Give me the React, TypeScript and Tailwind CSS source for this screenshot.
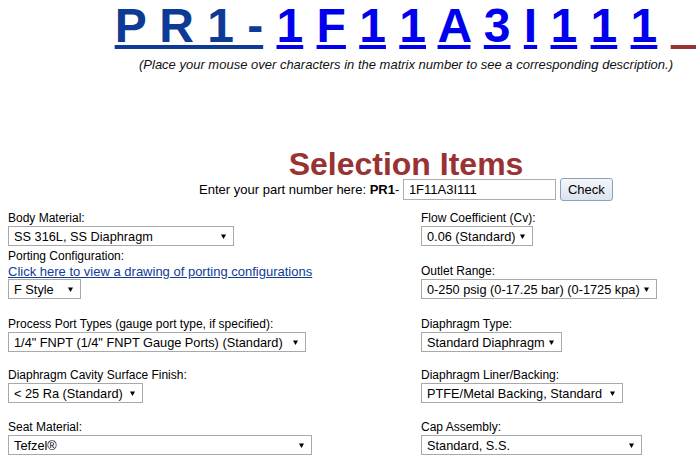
import React from "react";

const Arrow = () => (
  <svg width="5" height="5" viewBox="0 0 5 5" className="shrink-0">
    <path d="M0 0.5H5L2.5 5Z" fill="#000" />
  </svg>
);

const Sel = ({ w, text }: { w: string; text: string }) => (
  <div
    className={`flex h-[20px] items-center justify-between border border-[#a9a9a9] bg-white pl-[5px] pr-[7px] text-[12.75px] leading-[15px] text-black ${w}`}
  >
    <span className="whitespace-nowrap">{text}</span>
    <Arrow />
  </div>
);

const Label = ({ children }: { children: React.ReactNode }) => (
  <div className="whitespace-nowrap text-[12px] leading-[15px] text-black">{children}</div>
);

const chars = ["1", "F", "1", "1", "A", "3", "I", "1", "1", "1"];

export default function App() {
  return (
    <div className="h-[459px] w-[696px] overflow-hidden bg-white font-['Liberation_Sans',Arial,sans-serif] text-black">
      <div className="w-[812px]">
        <div className="whitespace-nowrap text-center text-[48px] font-bold leading-[52px]">
          <a className="text-[#0d3a94] underline">P R 1 -</a>{" "}
          {chars.map((c, i) => (
            <React.Fragment key={i}>
              <a className="text-[#0000ee] underline">{c}</a>{" "}
            </React.Fragment>
          ))}
          <span className="text-[#993333] underline">{"\u00a0\u00a0"}</span>
        </div>
        <div className="mt-[5px] whitespace-nowrap text-center text-[13px] italic leading-[16px] text-[#111]">
          (Place your mouse over characters in the matrix number to see a corresponding description.)
        </div>
        <div className="mt-[78px] text-center text-[32px] font-bold leading-[26px] text-[#993333]">
          Selection Items
        </div>
        <div className="flex h-[24px] items-center justify-center whitespace-nowrap text-[13px] leading-[15px]">
          <span>
            Enter your part number here: <b>PR1</b>-{"\u00a0"}
          </span>
          <div className="flex h-[21px] w-[153px] items-center border border-[#abadb3] bg-white pl-[5px] text-[13px]">
            1F11A3I111
          </div>
          <div className="ml-[4px] flex h-[23px] w-[53px] items-center justify-center rounded-[3px] border border-[#8aa0c0] bg-linear-to-b from-[#f4f7fb] to-[#dbe3ee] text-[13px]">
            Check
          </div>
        </div>

        <div className="pl-[8px]">
          <div className="mt-[10px] grid grid-cols-[413px_1fr]">
            <div>
              <Label>Body Material:</Label>
              <Sel w="w-[226px]" text="SS 316L, SS Diaphragm" />
            </div>
            <div>
              <Label>Flow Coefficient (Cv):</Label>
              <Sel w="w-[112px]" text="0.06 (Standard)" />
            </div>
          </div>
          <div className="mt-[3px] grid grid-cols-[413px_1fr]">
            <div>
              <Label>Porting Configuration:</Label>
              <div className="whitespace-nowrap text-[13px] leading-[15px]">
                <a className="text-[#103c96] underline">Click here to view a drawing of porting configurations</a>
              </div>
              <Sel w="w-[73px]" text="F Style" />
            </div>
            <div className="flex flex-col justify-end">
              <Label>Outlet Range:</Label>
              <Sel w="w-[236px]" text="0-250 psig (0-17.25 bar) (0-1725 kpa)" />
            </div>
          </div>
          <div className="mt-[18px] grid grid-cols-[413px_1fr]">
            <div>
              <Label>Process Port Types (gauge port type, if specified):</Label>
              <Sel w="w-[298px]" text={'1/4" FNPT (1/4" FNPT Gauge Ports) (Standard)'} />
            </div>
            <div>
              <Label>Diaphragm Type:</Label>
              <Sel w="w-[141px]" text="Standard Diaphragm" />
            </div>
          </div>
          <div className="mt-[16px] grid grid-cols-[413px_1fr]">
            <div>
              <Label>Diaphragm Cavity Surface Finish:</Label>
              <Sel w="w-[135px]" text="< 25 Ra (Standard)" />
            </div>
            <div>
              <Label>Diaphragm Liner/Backing:</Label>
              <Sel w="w-[202px]" text="PTFE/Metal Backing, Standard" />
            </div>
          </div>
          <div className="mt-[17px] grid grid-cols-[413px_1fr]">
            <div>
              <Label>Seat Material:</Label>
              <Sel w="w-[304px]" text="Tefzel®" />
            </div>
            <div>
              <Label>Cap Assembly:</Label>
              <Sel w="w-[221px]" text="Standard, S.S." />
            </div>
          </div>
        </div>
      </div>
    </div>
  );
}
